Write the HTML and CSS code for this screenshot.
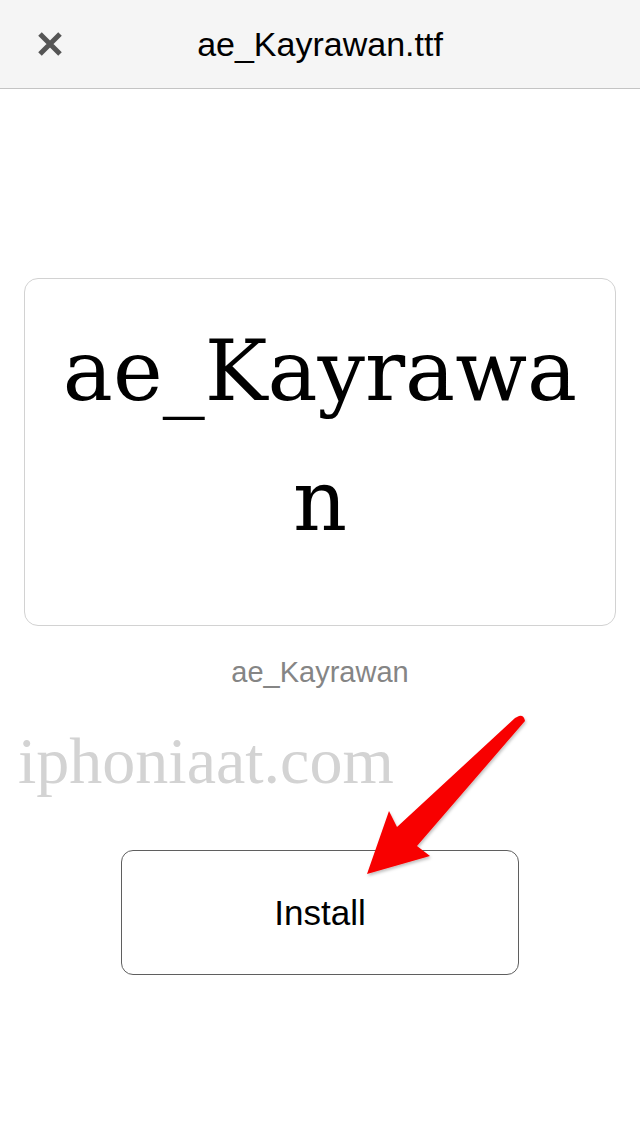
FILE: index.html
```html
<!DOCTYPE html>
<html>
<head>
    <title>ae_Kayrawan.ttf</title>
    <link rel="stylesheet" href="styles.css">
</head>
<body>
    <div class="top-bar">
        <div class="close-btn">
            <svg width="26" height="26" viewBox="0 0 26 26">
                <path d="M3 3 L23 23 M23 3 L3 23" stroke="#555" stroke-width="5" stroke-linecap="butt"/>
            </svg>
        </div>
        <div class="top-title">ae_Kayrawan.ttf</div>
        <div></div>
    </div>

    <div class="content">
        <div class="preview-card">ae_Kayrawan</div>
        <div class="font-name">ae_Kayrawan</div>
        <button class="install-btn">Install</button>
    </div>

    <div class="watermark">iphoniaat.com</div>

    <svg class="arrow" width="180" height="180" viewBox="0 0 180 180">
        <defs>
            <filter id="shadow" x="-20%" y="-20%" width="140%" height="140%">
                <feDropShadow dx="1" dy="2" stdDeviation="1.5" flood-color="#000" flood-opacity="0.25"/>
            </filter>
        </defs>
        <!-- svg origin sits at (355,705) on the page -->
        <path d="M164 11 Q169 10 170 16 L62 141 L75 151 L12 169 L34 106 L42 122 L160 13 Z" fill="#f80000" filter="url(#shadow)"/>
    </svg>
</body>
</html>
```

FILE: styles.css
```css
body {
    margin: 0;
    padding: 0;
    background: #fff;
    font-family: "Liberation Sans", Arial, sans-serif;
    height: 1136px;
    position: relative;
    overflow: hidden;
}

.top-bar {
    height: 88px;
    background: #f5f5f5;
    border-bottom: 1px solid #c4c4c4;
    display: grid;
    grid-template-columns: 100px 1fr 100px;
    align-items: center;
}

.close-btn {
    padding-left: 37px;
    display: flex;
    align-items: center;
}

.top-title {
    text-align: center;
    font-size: 34px;
    color: #000;
}

.content {
    display: flex;
    flex-direction: column;
    align-items: center;
}

.preview-card {
    box-sizing: border-box;
    align-self: stretch;
    margin: 189px 24px 0;
    height: 348px;
    padding: 27px 20px 0;
    border: 1px solid #d2d2d2;
    border-radius: 14px;
    font-family: "DejaVu Serif", serif;
    font-size: 84px;
    line-height: 130px;
    text-align: center;
    word-break: break-all;
    color: #000;
}

.font-name {
    margin-top: 30px;
    font-size: 29px;
    line-height: 32px;
    color: #858585;
}

.install-btn {
    margin-top: 162px;
    width: 398px;
    height: 125px;
    background: #fff;
    border: 1.5px solid #5f5f5f;
    border-radius: 12px;
    font-family: inherit;
    font-size: 35px;
    color: #000;
}

.watermark {
    position: absolute;
    left: 18px;
    top: 729px;
    font-family: "Liberation Serif", serif;
    font-size: 66px;
    line-height: 64px;
    color: #d3d3d3;
}

.arrow {
    position: absolute;
    left: 355px;
    top: 705px;
}
```
